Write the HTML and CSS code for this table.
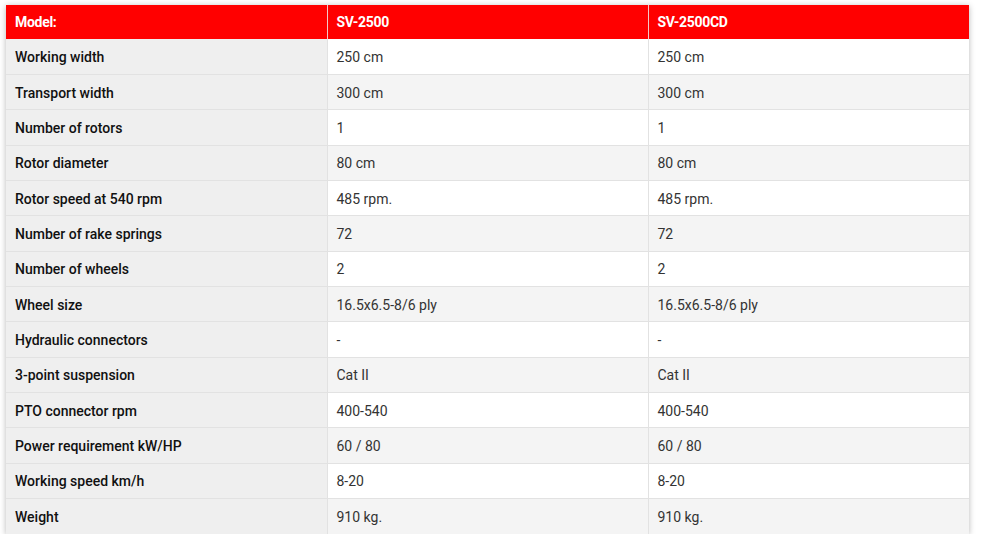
FILE: index.html
```html
<!DOCTYPE html>
<html>
<head>
<meta charset="utf-8">
<link rel="stylesheet" href="styles.css">
</head>
<body>
<div class="wrap">
<table class="specs">
  <thead>
    <tr><th>Model:</th><th>SV-2500</th><th>SV-2500CD</th></tr>
  </thead>
  <tbody>
    <tr><td>Working width</td><td>250 cm</td><td>250 cm</td></tr>
    <tr><td>Transport width</td><td>300 cm</td><td>300 cm</td></tr>
    <tr><td>Number of rotors</td><td>1</td><td>1</td></tr>
    <tr><td>Rotor diameter</td><td>80 cm</td><td>80 cm</td></tr>
    <tr><td>Rotor speed at 540 rpm</td><td>485 rpm.</td><td>485 rpm.</td></tr>
    <tr><td>Number of rake springs</td><td>72</td><td>72</td></tr>
    <tr><td>Number of wheels</td><td>2</td><td>2</td></tr>
    <tr><td>Wheel size</td><td>16.5x6.5-8/6 ply</td><td>16.5x6.5-8/6 ply</td></tr>
    <tr><td>Hydraulic connectors</td><td>-</td><td>-</td></tr>
    <tr><td>3-point suspension</td><td>Cat II</td><td>Cat II</td></tr>
    <tr><td>PTO connector rpm</td><td>400-540</td><td>400-540</td></tr>
    <tr><td>Power requirement kW/HP</td><td>60 / 80</td><td>60 / 80</td></tr>
    <tr><td>Working speed km/h</td><td>8-20</td><td>8-20</td></tr>
    <tr><td>Weight</td><td>910 kg.</td><td>910 kg.</td></tr>
  </tbody>
</table>
</div>
</body>
</html>
```
FILE: styles.css
```css
html, body {
  margin: 0;
  padding: 0;
  background: #ffffff;
}
.wrap {
  padding: 5px 0 0 6px;
}
.specs {
  width: 963px;
  border-collapse: collapse;
  table-layout: fixed;
  font-family: "Roboto", "Liberation Sans", sans-serif;
  font-size: 14px;
  color: #222;
  box-shadow: 0 1px 6px rgba(0,0,0,0.28);
}
.specs th {
  background: #ff0000;
  color: #ffffff;
  font-weight: bold;
  letter-spacing: -0.3px;
  text-align: left;
  height: 34px;
  padding: 0 9px;
  border-left: 1px solid #f3c8c8;
  box-sizing: border-box;
}
.specs th:first-child { border-left: none; }
.specs td {
  height: 35.36px;
  padding: 1px 9px 0;
  box-sizing: border-box;
  border-bottom: 1px solid #e2e2e2;
  border-left: 1px solid #e2e2e2;
  background: #ffffff;
  color: #333;
}
.specs td:first-child {
  border-left: none;
  background: #efefef;
  color: #111;
  font-weight: 500;
}
.specs tbody tr:nth-child(even) td { background: #f4f4f4; }
.specs tbody tr:nth-child(even) td:first-child { background: #efefef; }
.specs tbody tr:last-child td { border-bottom: none; }
```
